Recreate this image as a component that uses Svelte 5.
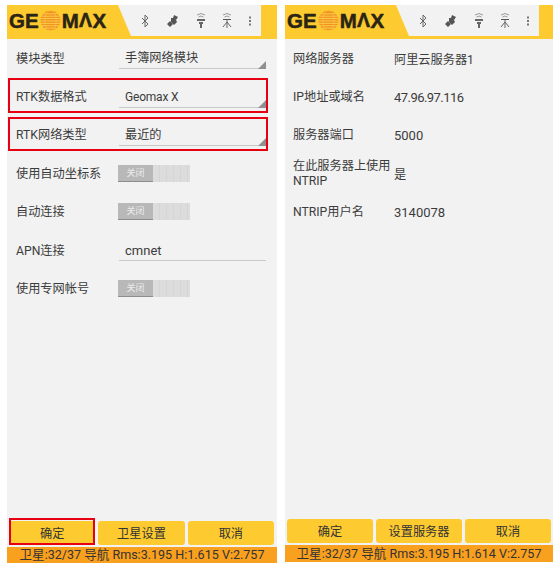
<script>
  const left = [
    { label: '模块类型', kind: 'select', value: '手簿网络模块' },
    { label: 'RTK数据格式', kind: 'select', value: 'Geomax X', marked: true, fit: 'squeeze' },
    { label: 'RTK网络类型', kind: 'select', value: '最近的', marked: true },
    { label: '使用自动坐标系', kind: 'toggle' },
    { label: '自动连接', kind: 'toggle' },
    { label: 'APN连接', kind: 'input', value: 'cmnet', fit: 'big' },
    { label: '使用专网帐号', kind: 'toggle' }
  ];
  const right = [
    { label: '网络服务器', value: '阿里云服务器1' },
    { label: 'IP地址或域名', value: '47.96.97.116', fit: 'dots' },
    { label: '服务器端口', value: '5000', fit: 'big' },
    { label: '在此服务器上使用NTRIP', value: '是' },
    { label: 'NTRIP用户名', value: '3140078', fit: 'big' }
  ];
  const screens = [
    { cls: 'one', rows: left, buttons: ['确定', '卫星设置', '取消'], status: '卫星:32/37 导航 Rms:3.195 H:1.615 V:2.757', markFirst: true },
    { cls: 'two', rows: right, buttons: ['确定', '设置服务器', '取消'], status: '卫星:32/37 导航 Rms:3.195 H:1.614 V:2.757', markFirst: false }
  ];
</script>

<div class="page">
  {#each screens as s}
    <section class="phone {s.cls}">
      <header class="head">
        <div class="logo">
          <span>GE</span>
          <svg class="globe" viewBox="0 0 22 22" width="21" height="21" aria-hidden="true">
            <circle cx="11" cy="11" r="10.5" fill="#f0941a" />
            <g stroke="#ffd35c" stroke-width="0.9" fill="none">
              <path d="M3 4h16M1.500 6.500h19M.6 9h20.800M.5 11.500h21M.8 14h20.400M2 16.500h18M4.500 19h13" />
              <path d="M11 .5a6 10.500 0 0 0 0 21" opacity=".45" />
              <path d="M11 .5a6 10.500 0 0 1 0 21" opacity=".45" />
            </g>
          </svg>
          <span class="wide">M</span><span class="delta">Λ</span><span class="wide">X</span>
        </div>
        <div class="tray">
          <svg viewBox="0 0 12 14" width="12" height="14" aria-hidden="true">
            <path d="M3 4l6 6-3 3V1l3 3-6 6" fill="none" stroke="#666" stroke-width="1" />
          </svg>
          <svg viewBox="0 0 14 14" width="14" height="14" aria-hidden="true">
            <g fill="#555">
              <path d="M5 4l4 0 2 4-3 3-3-3z" />
              <path d="M1 10l3-3 3 3-3 3zM8 1l4 2-2 3-3-2z" />
            </g>
          </svg>
          <svg viewBox="0 0 12 18" width="12" height="18" aria-hidden="true">
            <g fill="none" stroke="#999" stroke-width="1">
              <path d="M2 3q4-3 8 0M3.500 5q2.500-2 5 0" />
            </g>
            <path d="M2 7h8v2H2zM4 10h4v2H4zM5 12h2v4H5z" fill="#666" />
          </svg>
          <svg viewBox="0 0 12 18" width="12" height="18" aria-hidden="true">
            <g fill="none" stroke="#999" stroke-width="1">
              <path d="M2 3q4-3 8 0M3.500 5q2.500-2 5 0" />
            </g>
            <path d="M2 7h8v1H2z" fill="#555" />
            <path d="M6 8v8M6 10l-4 5M6 10l4 5" fill="none" stroke="#666" stroke-width="1" />
          </svg>
          <svg viewBox="0 0 4 12" width="4" height="12" aria-hidden="true">
            <path d="M1 1.500h2v2H1zM1 5h2v2H1zM1 8.500h2v2H1z" fill="#777" />
          </svg>
        </div>
      </header>

      <div class="form">
        {#each s.rows as r}
          <div class="row" class:marked={r.marked}>
            <div class="label">{r.label}</div>
            {#if r.kind === 'select'}
              <div class="field select {r.fit ?? ''}">{r.value}<i class="corner"></i></div>
            {:else if r.kind === 'input'}
              <div class="field input {r.fit ?? ''}">{r.value}</div>
            {:else if r.kind === 'toggle'}
              <div class="toggle">
                <span class="off">关闭</span>
                <span class="track"></span>
              </div>
            {:else}
              <div class="plain {r.fit ?? ''}">{r.value}</div>
            {/if}
          </div>
        {/each}
      </div>

      <div class="buttons">
        {#each s.buttons as b, i}
          <button class:marked={s.markFirst && i === 0}>{b}</button>
        {/each}
      </div>
      <footer class="status">{s.status}</footer>
    </section>
  {/each}
</div>

<style>
  :global(body) {
    margin: 0;
    background: #fff;
  }
  .page {
    width: 559px;
    height: 569px;
    display: flex;
    align-items: flex-start;
    gap: 8px;
    padding: 5px 6px 0 7px;
    box-sizing: border-box;
    font-family: Roboto, "Noto Sans CJK SC", sans-serif;
    color: #3c3c3c;
    font-size: 12.2px;
  }
  .phone {
    display: flex;
    flex-direction: column;
    background: #f2f2f2;
  }
  .phone.one {
    width: 270px;
    height: 558px;
  }
  .phone.two {
    width: 268px;
    height: 557px;
  }
  .head {
    height: 34px;
    flex: none;
    background: #fdca30;
    display: flex;
    padding-bottom: 3px;
    box-sizing: border-box;
  }
  .logo {
    width: 122px;
    flex: none;
    display: flex;
    align-items: center;
    padding-left: 2px;
    box-sizing: border-box;
    font-family: "Liberation Sans", sans-serif;
    font-weight: 700;
    font-size: 20.5px;
    color: #2a2416;
    -webkit-text-stroke: 0.5px #2a2416;
  }
  .globe {
    flex: none;
    margin: 0 1px 0 1px;
  }
  .wide {
    letter-spacing: 0.4px;
  }
  .delta {
    font-size: 19.5px;
    letter-spacing: 0.4px;
  }
  .tray {
    width: 143px;
    margin-left: -11px;
    flex: none;
    background: #f2f2f2;
    clip-path: polygon(0 0, 100% 0, 100% 100%, 13px 100%);
    display: flex;
    align-items: center;
    padding-left: 21px;
    padding-right: 9px;
    box-sizing: border-box;
    justify-content: space-between;
  }
  .form {
    flex: 1;
  }
  .row {
    height: 38.4px;
    display: flex;
    align-items: center;
    position: relative;
    padding-left: 9px;
  }
  .two .row {
    padding-left: 8px;
  }
  .label {
    width: 103px;
    flex: none;
    line-height: 15px;
    padding-top: 2px;
  }
  .two .label {
    width: 101px;
  }
  .plain {
    padding-top: 2px;
  }
  .marked::after {
    content: "";
    position: absolute;
    left: 1px;
    right: 9px;
    top: 1px;
    bottom: 3px;
    border: 2px solid #e60012;
    pointer-events: none;
  }
  .field {
    width: 147px;
    height: 21px;
    line-height: 21px;
    padding-left: 6px;
    box-sizing: border-box;
    border-bottom: 1px solid #c9c9c9;
    position: relative;
    margin-top: 1px;
  }
  .big {
    font-size: 13px;
  }
  .dots {
    font-size: 13px;
    letter-spacing: -0.55px;
  }
  .squeeze {
    font-size: 12px;
    letter-spacing: -0.2px;
  }
  .corner {
    position: absolute;
    right: 0;
    bottom: -1px;
    width: 0;
    height: 0;
    border-left: 8px solid transparent;
    border-bottom: 8px solid #8f8f8f;
  }
  .toggle {
    display: flex;
    width: 72px;
    height: 17px;
    margin-left: -1px;
  }
  .off {
    width: 35px;
    background: #b8b8b8;
    border-bottom: 1px solid #8d8d8d;
    box-sizing: border-box;
    color: #ececec;
    font-size: 9px;
    line-height: 16px;
    text-align: center;
  }
  .track {
    flex: 1;
    background: repeating-linear-gradient(90deg, #dcdcdc 0 6px, #d5d5d5 6px 7px);
  }
  .buttons {
    display: flex;
    gap: 3px;
    padding: 0 3px 0 2px;
    height: 24px;
    flex: none;
    margin-bottom: 2px;
  }
  .two .buttons {
    padding-right: 2px;
  }
  button {
    flex: 1;
    background: #fdca30;
    border: 0;
    border-radius: 3px;
    font: inherit;
    color: #333;
    padding: 0;
    position: relative;
  }
  button.marked {
    border-radius: 0;
  }
  button.marked::after {
    left: 0;
    right: 0;
    top: -3px;
    bottom: 0;
  }
  .status {
    height: 17px;
    flex: none;
    background: #f9a01e;
    line-height: 17px;
    text-align: center;
    font-size: 12.55px;
    white-space: nowrap;
    color: #333;
  }
  .one .status {
    height: 16px;
    line-height: 16px;
  }
</style>
